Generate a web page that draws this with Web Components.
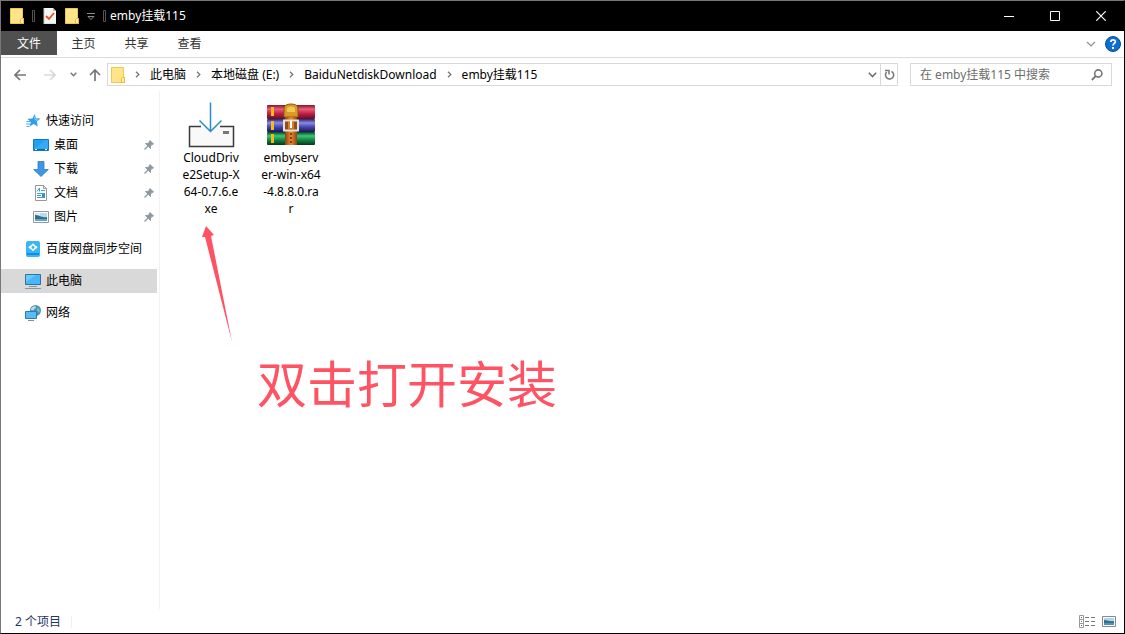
<!DOCTYPE html>
<html lang="zh-CN">
<head>
<meta charset="utf-8">
<title>emby挂载115</title>
<style>
  html, body { height: 100%; }
  body {
    margin: 0;
    font: 12px/16px "Noto Sans", "Noto Sans CJK SC", sans-serif;
    color: #000;
    background: #fff;
  }
</style>
</head>
<body>
<explorer-window>
  <title-bar slot="title">emby挂载115</title-bar>
  <ribbon-bar slot="ribbon"></ribbon-bar>
  <address-bar slot="address"></address-bar>
  <nav-pane slot="nav">
    <nav-item icon="star">快速访问</nav-item>
    <nav-item icon="desktop" nested pinned>桌面</nav-item>
    <nav-item icon="download" nested pinned>下载</nav-item>
    <nav-item icon="document" nested pinned>文档</nav-item>
    <nav-item icon="picture" nested pinned>图片</nav-item>
    <nav-item icon="netdisk" group>百度网盘同步空间</nav-item>
    <nav-item icon="computer" group selected>此电脑</nav-item>
    <nav-item icon="network" group>网络</nav-item>
  </nav-pane>
  <file-view slot="files">
    <file-item icon="installer">CloudDrive2Setup-X64-0.7.6.exe</file-item>
    <file-item icon="archive">embyserver-win-x64-4.8.8.0.rar</file-item>
    <callout-note slot="note">双击打开安装</callout-note>
  </file-view>
  <status-bar slot="status">2 个项目</status-bar>
</explorer-window>

<script>
const ICONS = {
  folder: [14, 16, `<path d="M.5.5h12v10h1v5H.5z" fill="#ffe48a" stroke="#efc84f"/><path d="M10.500 15.500v-4l1-1h2v5z" fill="#fff0b0" stroke="#e8b93a"/>`],
  check: [14, 16, `<path d="M1 0h9l3 3v13H1z" fill="#f5f5f5"/><path d="M10 0l3 3h-3z" fill="#b5b5b5"/><path d="M1 0v16h12" fill="none" stroke="#c9c9c9"/><path d="M3 8l3 3 5-6" fill="none" stroke="#e8511d" stroke-width="1.800"/>`],
  grip: [3, 12, `<path d="M.5.5h2v11h-2z" fill="none" stroke="#555"/>`],
  customize: [8, 8, `<path d="M0 1.500h8M1 4.500h6L4 7.500z" fill="none" stroke="#8c8c8c"/>`],
  minimize: [10, 10, `<path d="M0 5.500h10" stroke="#fff"/>`],
  maximize: [10, 10, `<path d="M.5.5h9v9h-9z" fill="none" stroke="#fff"/>`],
  close: [10, 10, `<path d="M.3.3l9.400 9.400M9.700.3L.3 9.700" stroke="#fff" stroke-width="1.200"/>`],
  collapse: [10, 6, `<path d="M1 1l4 4 4-4" fill="none" stroke="#909090" stroke-width="1.200"/>`],
  help: [16, 16, `<circle cx="8" cy="8" r="7.500" fill="#0b6ed0" stroke="#0a4f98"/><path d="M5.800 6c0-3 4.500-2.800 4.500-.3C10.300 7.300 8 7.500 8 9.500" fill="none" stroke="#fff" stroke-width="1.800"/><path d="M7 11h2v2H7z" fill="#fff"/>`],
  back: [12, 12, `<path d="M6 1L1 6l5 5M1 6h11" fill="none" stroke="#757575" stroke-width="1.700"/>`],
  forward: [12, 12, `<path d="M6 1l5 5-5 5M11 6H0" fill="none" stroke="#d9d9d9" stroke-width="1.700"/>`],
  recent: [7, 5, `<path d="M.7.7l2.800 3L6.300.7" fill="none" stroke="#777" stroke-width="1.400"/>`],
  up: [12, 12, `<path d="M1 6l5-5 5 5M6 1v11" fill="none" stroke="#757575" stroke-width="1.700"/>`],
  sep: [5, 7, `<path d="M1 .7l2.800 2.800L1 6.300" fill="none" stroke="#777" stroke-width="1.300"/>`],
  drop: [9, 6, `<path d="M.8.8l3.700 3.700L8.200.8" fill="none" stroke="#707070" stroke-width="1.600"/>`],
  refresh: [11, 12, `<path d="M7.500 2.300A4.100 4.100 0 1 1 2.600 3.100" fill="none" stroke="#777" stroke-width="1.500"/><path d="M1 1.500h4v4" fill="none" stroke="#777" stroke-width="1.500"/>`],
  search: [12, 12, `<circle cx="7.300" cy="4.500" r="3.600" fill="none" stroke="#777" stroke-width="1.600"/><path d="M4.800 7L.8 11" stroke="#777" stroke-width="1.800"/>`],
  star: [16, 16, `<path d="M9.700 1l1.200 4.300 4.600.3-3.600 2.800.8 5.100-4-2.500-4.200 2.600 1.300-4.700L2.500 5.800l4.900-.2z" fill="#2d9fe6"/><path d="M1.500 8.500h4M1 11h4M1.500 13.500h3" stroke="#47aeea"/><path d="M9.500 3.500l.6 3 2.600.3-2 1.300" fill="none" stroke="#7bd0ff"/>`],
  desktop: [16, 13, `<path d="M.5.500h15v11H.5z" fill="#1da0f5" stroke="#1577bd"/><path d="M1 9.500L13 1h2v9H1z" fill="#46b5fb" opacity=".55"/><path d="M1 10.500h14" stroke="#08649f"/><path d="M2 10.500h2M12 10.500h2" stroke="#fff"/>`],
  download: [16, 16, `<path d="M5 .5h6v8h4.300L8 15.500.7 8.500H5z" fill="#3f97e2" stroke="#297dc6" stroke-width=".8"/>`],
  document: [12, 16, `<path d="M.5.5h8l3 3v12H.5z" fill="#fff" stroke="#999"/><path d="M8.500.5v3h3" fill="none" stroke="#999"/><path d="M2 6.500L4.500 3v3.500M6 5.500h4M2 8.500h8M2 10.500h4M2 12.500h8" fill="none" stroke="#3f9ccf"/><path d="M7 9h3v3H7z" fill="#2f8fc8"/>`],
  picture: [16, 12, `<path d="M.5.5h15v11H.5z" fill="#fff" stroke="#999"/><path d="M2 2h12v8H2z" fill="#b5dcf6"/><path d="M2 4c4 0 6 3 12 2v2H2z" fill="#37707b"/><path d="M2 8h12v2H2z" fill="#5ba5d7"/><path d="M3 3h4" stroke="#fff"/>`],
  netdisk: [14, 16, `<rect width="14" height="16" rx="2" fill="#37b7f8"/><path d="M1 12h12v2H1z" fill="#168ce0"/><path d="M7 3.300l3 3-3 3-3-3z" fill="none" stroke="#fff" stroke-width="1.500"/><circle cx="4" cy="6.300" r="1.300" fill="#fff"/><circle cx="10" cy="6.300" r="1.300" fill="#fff"/>`],
  computer: [16, 15, `<path d="M.5.500h15v10H.5z" fill="#45b7fa" stroke="#3a718f"/><path d="M1 8L11 1H1z" fill="#7bd0ff" opacity=".7"/><path d="M4 12.500h8M0 14.500h16" stroke="#8299a8"/>`],
  network: [16, 16, `<circle cx="10.500" cy="5.500" r="5.500" fill="#4a93b4"/><path d="M6 4c1-3 4-3.500 5-2s-2 1-2 2.500-2 .5-3 .5z" fill="#b9dbe4"/><path d="M12.500 2.500c2 1 2.500 3 2 4.500s-2-1-2.500-2z" fill="#7fb8cf"/><path d="M.5 6.500h11v7H.5z" fill="#58bdf7" stroke="#3379a7"/><path d="M3 15.500h6" stroke="#77909e"/>`],
  pin: [10, 10, `<path d="M6 .5L9.500 4 7.800 4.500 6.500 6.300v2.200L1.500 3.500h2.200L5.500 2.200z" fill="#8d99a1" stroke="#8d99a1"/><path d="M4 6L.5 9.500" stroke="#8d99a1" stroke-width="1.200"/>`],
  details: [16, 13, `<path d="M.5.5h4v12h-4zM.5 4.500h4M.5 8.500h4" fill="none" stroke="#999"/><path d="M6 2.500h4M12 2.500h4M6 6.500h4M12 6.500h4M6 10.500h4M12 10.500h4" stroke="#777"/><path d="M2 2.500h1" stroke="#456"/><path d="M2 6.500h1" stroke="#28e"/><path d="M2 10.500h1" stroke="#c22"/>`],
  thumbs: [14, 11, `<path d="M.5.5h13v10H.5z" fill="#fff" stroke="#888"/><path d="M2 2h10v7H2z" fill="#a9d5f4"/><path d="M2 4c4 0 6 2 10 1v2H2z" fill="#37707b"/><path d="M2 7h10v2H2z" fill="#4b91cf"/>`],
  installer: [48, 48, `<path d="M3 25h43v21H3z" fill="#f9f9f9"/><path d="M14 25.500H2.500v20h44v-20H33" fill="none" stroke="#3b3b3b" stroke-width="1.500"/><path d="M36 30h6v3h-6z" fill="#777"/><path d="M23.500 1.500V30M12.500 19.500l11 11 11-11" fill="none" stroke="#2c8cc6" stroke-width="1.500"/>`],
  archive: [50, 44, `
    <defs>
      <linearGradient id="r" x2="0" y2="1"><stop stop-color="#7c1730"/><stop offset=".3" stop-color="#ed5d76"/><stop offset=".6" stop-color="#c22247"/><stop offset="1" stop-color="#650b24"/></linearGradient>
      <linearGradient id="b" x2="0" y2="1"><stop stop-color="#252665"/><stop offset=".3" stop-color="#8b8ae8"/><stop offset=".6" stop-color="#4848b0"/><stop offset="1" stop-color="#17194f"/></linearGradient>
      <linearGradient id="g" x2="0" y2="1"><stop stop-color="#064421"/><stop offset=".3" stop-color="#3ec577"/><stop offset=".6" stop-color="#138845"/><stop offset="1" stop-color="#043719"/></linearGradient>
      <linearGradient id="s"><stop stop-color="#8f420e"/><stop offset=".5" stop-color="#e88d2c"/><stop offset="1" stop-color="#92430d"/></linearGradient>
    </defs>
    <rect x="1" y="2" width="48" height="14" rx="1" fill="url(#r)"/>
    <rect x="1" y="16" width="48" height="13" rx="1" fill="url(#b)"/>
    <rect x="1" y="29" width="48" height="13" rx="1" fill="url(#g)"/>
    <path d="M5 4h3v9H5zM5 18h3v9H5zM5 31h3v9H5z" fill="#f6b91c"/>
    <path d="M18 6q0-5 7-5t7 5v8H18z" fill="#d99a2b" stroke="#8b570d"/>
    <path d="M19 14h12v28H19z" fill="url(#s)"/>
    <path d="M21 5q4-3 8 0v4h-8z" fill="#f2c94f"/>
    <path d="M18 17.500h14v10H18z" fill="#925019" stroke="#e6e2dc" stroke-width="2"/>
    <path d="M22 19h6v7h-6z" fill="#d97f28"/>
    <path d="M25 18v7" stroke="#fff" stroke-width="2"/>
    <path d="M24 31h2M24 35h2M24 39h2" stroke="#5e2706" stroke-width="1.500"/>`]
};

function define(name, html, setup) {
  const template = document.createElement('template');
  template.innerHTML = html;
  customElements.define(name, class extends HTMLElement {
    connectedCallback() {
      if (this.shadowRoot) return;
      const root = this.attachShadow({ mode: 'open' });
      root.append(template.content.cloneNode(true));
      if (setup) setup(this, root);
    }
  });
}

const RESET = `
  *, *::before { box-sizing: border-box; }
  button, input { font: inherit; color: inherit; border: 0; padding: 0; margin: 0; background: none; }
  button { display: flex; align-items: center; justify-content: center; flex: none; }
  a { color: inherit; text-decoration: none; }
`;

define('ui-icon', `<style>:host { display: block; flex: none; } svg { display: block; }</style>`, (host, root) => {
  const [w, h, art] = ICONS[host.getAttribute('name')];
  root.innerHTML += `<svg width="${w}" height="${h}" viewBox="0 0 ${w} ${h}" aria-hidden="true">${art}</svg>`;
});

define('title-bar', `
  <style>${RESET}
    :host { display: flex; align-items: center; height: 30px; background: #000; color: #fff; }
    .quick { display: flex; align-items: center; gap: 8px; padding: 0 4px 0 9px; }
    h1 { flex: 1; margin: 0; font: inherit; }
    .frame { display: flex; }
    .frame button { width: 46px; height: 30px; }
  </style>
  <div class="quick">
    <ui-icon name="folder"></ui-icon>
    <ui-icon name="grip"></ui-icon>
    <button aria-label="属性"><ui-icon name="check"></ui-icon></button>
    <button aria-label="新建文件夹"><ui-icon name="folder"></ui-icon></button>
    <button aria-label="自定义快速访问工具栏"><ui-icon name="customize"></ui-icon></button>
    <ui-icon name="grip"></ui-icon>
  </div>
  <h1><slot></slot></h1>
  <div class="frame">
    <button aria-label="最小化"><ui-icon name="minimize"></ui-icon></button>
    <button aria-label="最大化"><ui-icon name="maximize"></ui-icon></button>
    <button aria-label="关闭"><ui-icon name="close"></ui-icon></button>
  </div>`);

define('ribbon-bar', `
  <style>${RESET}
    :host { display: flex; align-items: flex-start; height: 27px; border-bottom: 1px solid #dadbdc; box-sizing: border-box; color: #333; }
    nav { display: flex; flex: 1; }
    nav button { width: 53px; height: 24px; padding-top: 2px; }
    nav .file { width: 56px; background: #505050; color: #fff; }
    .tools { display: flex; align-items: center; gap: 9px; height: 26px; padding-right: 3px; }
  </style>
  <nav>
    <button class="file">文件</button>
    <button>主页</button>
    <button>共享</button>
    <button>查看</button>
  </nav>
  <div class="tools">
    <button aria-label="展开功能区"><ui-icon name="collapse"></ui-icon></button>
    <button aria-label="帮助"><ui-icon name="help"></ui-icon></button>
  </div>`);

define('address-bar', `
  <style>${RESET}
    :host { display: flex; align-items: center; height: 33px; padding: 0 12px 0 4px; box-sizing: border-box; }
    .history { display: flex; }
    .history button { height: 24px; width: 30px; }
    .history .recent { width: 17px; }
    .history .up { width: 25px; }
    .box { display: flex; align-items: center; height: 23px; border: 1px solid #d9d9d9; }
    .path { flex: 1; min-width: 0; }
    ol { display: flex; align-items: center; flex: 1; list-style: none; margin: 0; padding: 0 0 0 3px; white-space: nowrap; }
    li { display: flex; align-items: center; }
    li ui-icon[name="sep"] { margin: 0 10px; }
    .path > button { width: 16px; height: 21px; }
    .path > .refresh { width: 17px; border-left: 1px solid #d9d9d9; }
    .search { width: 202px; margin-left: 12px; padding: 0 8px 0 9px; }
    input { flex: 1; min-width: 0; outline: 0; height: 21px; }
    input::placeholder { color: #6d6d6d; opacity: 1; }
  </style>
  <div class="history">
    <button aria-label="后退"><ui-icon name="back"></ui-icon></button>
    <button aria-label="前进"><ui-icon name="forward"></ui-icon></button>
    <button class="recent" aria-label="最近浏览的位置"><ui-icon name="recent"></ui-icon></button>
    <button class="up" aria-label="上移"><ui-icon name="up"></ui-icon></button>
  </div>
  <div class="box path">
    <ol>
      <li><ui-icon name="folder"></ui-icon><ui-icon name="sep"></ui-icon></li>
      <li><a href="#pc">此电脑</a><ui-icon name="sep"></ui-icon></li>
      <li><a href="#e">本地磁盘 (E:)</a><ui-icon name="sep"></ui-icon></li>
      <li><a href="#download">BaiduNetdiskDownload</a><ui-icon name="sep"></ui-icon></li>
      <li><a href="#emby">emby挂载115</a></li>
    </ol>
    <button aria-label="以前的位置"><ui-icon name="drop"></ui-icon></button>
    <button class="refresh" aria-label="刷新"><ui-icon name="refresh"></ui-icon></button>
  </div>
  <div class="box search">
    <input type="text" aria-label="搜索" placeholder="在 emby挂载115 中搜索">
    <button aria-label="开始搜索"><ui-icon name="search"></ui-icon></button>
  </div>`);

define('nav-pane', `
  <style>
    :host { display: block; padding: 18px 2px 0 0; border-right: 1px solid #f2f2f2; box-sizing: border-box; }
    nav { display: flex; flex-direction: column; }
  </style>
  <nav aria-label="导航窗格"><slot></slot></nav>`);

define('nav-item', `
  <style>${RESET}
    :host { display: block; }
    :host([group]) { margin-top: 8px; }
    :host([selected]) { background: #d9d9d9; }
    a { display: flex; align-items: center; gap: 5px; height: 24px; padding: 0 3px 0 24px; white-space: nowrap; }
    :host([nested]) a { padding-left: 32px; }
    .icon { display: flex; justify-content: center; width: 16px; flex: none; }
    .label { flex: 1; }
  </style>
  <a href="#"><span class="icon"></span><span class="label"><slot></slot></span></a>`, (host, root) => {
  root.querySelector('.icon').innerHTML = `<ui-icon name="${host.getAttribute('icon')}"></ui-icon>`;
  if (host.hasAttribute('pinned')) {
    root.querySelector('a').insertAdjacentHTML('beforeend', '<ui-icon name="pin"></ui-icon>');
  }
});

define('file-view', `
  <style>
    :host { display: block; position: relative; padding: 10px 11px; min-width: 0; }
    .grid { display: flex; flex-wrap: wrap; }
  </style>
  <div class="grid"><slot></slot></div>
  <slot name="note"></slot>`);

define('file-item', `
  <style>${RESET}
    :host { display: block; width: 80px; }
    button { flex-direction: column; width: 100%; }
    .icon { display: flex; align-items: center; height: 48px; }
    .label { width: 60px; line-height: 17px; word-break: break-all; text-align: center; }
  </style>
  <button><span class="icon"></span><span class="label"><slot></slot></span></button>`, (host, root) => {
  root.querySelector('.icon').innerHTML = `<ui-icon name="${host.getAttribute('icon')}"></ui-icon>`;
});

define('callout-note', `
  <style>
    :host { position: absolute; left: 42px; top: 134px; color: #ff5263; }
    svg { display: block; }
    p { margin: 0 0 0 55px; font: 50px/60px "Noto Sans CJK SC", sans-serif; white-space: nowrap; }
  </style>
  <svg width="32" height="126" viewBox="0 0 32 126" aria-hidden="true">
    <path d="M4 1l8 9-3 1 21 106L3 12l-3 0z" fill="currentColor"/>
  </svg>
  <p><slot></slot></p>`);

define('status-bar', `
  <style>${RESET}
    :host { display: flex; align-items: center; height: 24px; padding: 0 8px 0 14px; box-sizing: border-box; color: #1f3864; }
    .count { flex: 1; padding-top: 2px; }
    .count span { display: inline-block; padding-right: 10px; border-right: 1px solid #f0f0f0; line-height: 12px; }
    .views { display: flex; align-items: center; gap: 7px; }
  </style>
  <div class="count"><span><slot></slot></span></div>
  <div class="views">
    <button aria-label="详细信息"><ui-icon name="details"></ui-icon></button>
    <button aria-label="大缩略图"><ui-icon name="thumbs"></ui-icon></button>
  </div>`);

define('explorer-window', `
  <style>
    :host { display: flex; flex-direction: column; min-height: 100%; box-sizing: border-box; border: 1px solid; border-color: #777 #000 #000 #777; }
    main { flex: 1; display: grid; grid-template-columns: 159px 1fr; }
  </style>
  <slot name="title"></slot>
  <slot name="ribbon"></slot>
  <slot name="address"></slot>
  <main><slot name="nav"></slot><slot name="files"></slot></main>
  <slot name="status"></slot>`);
</script>
</body>
</html>
